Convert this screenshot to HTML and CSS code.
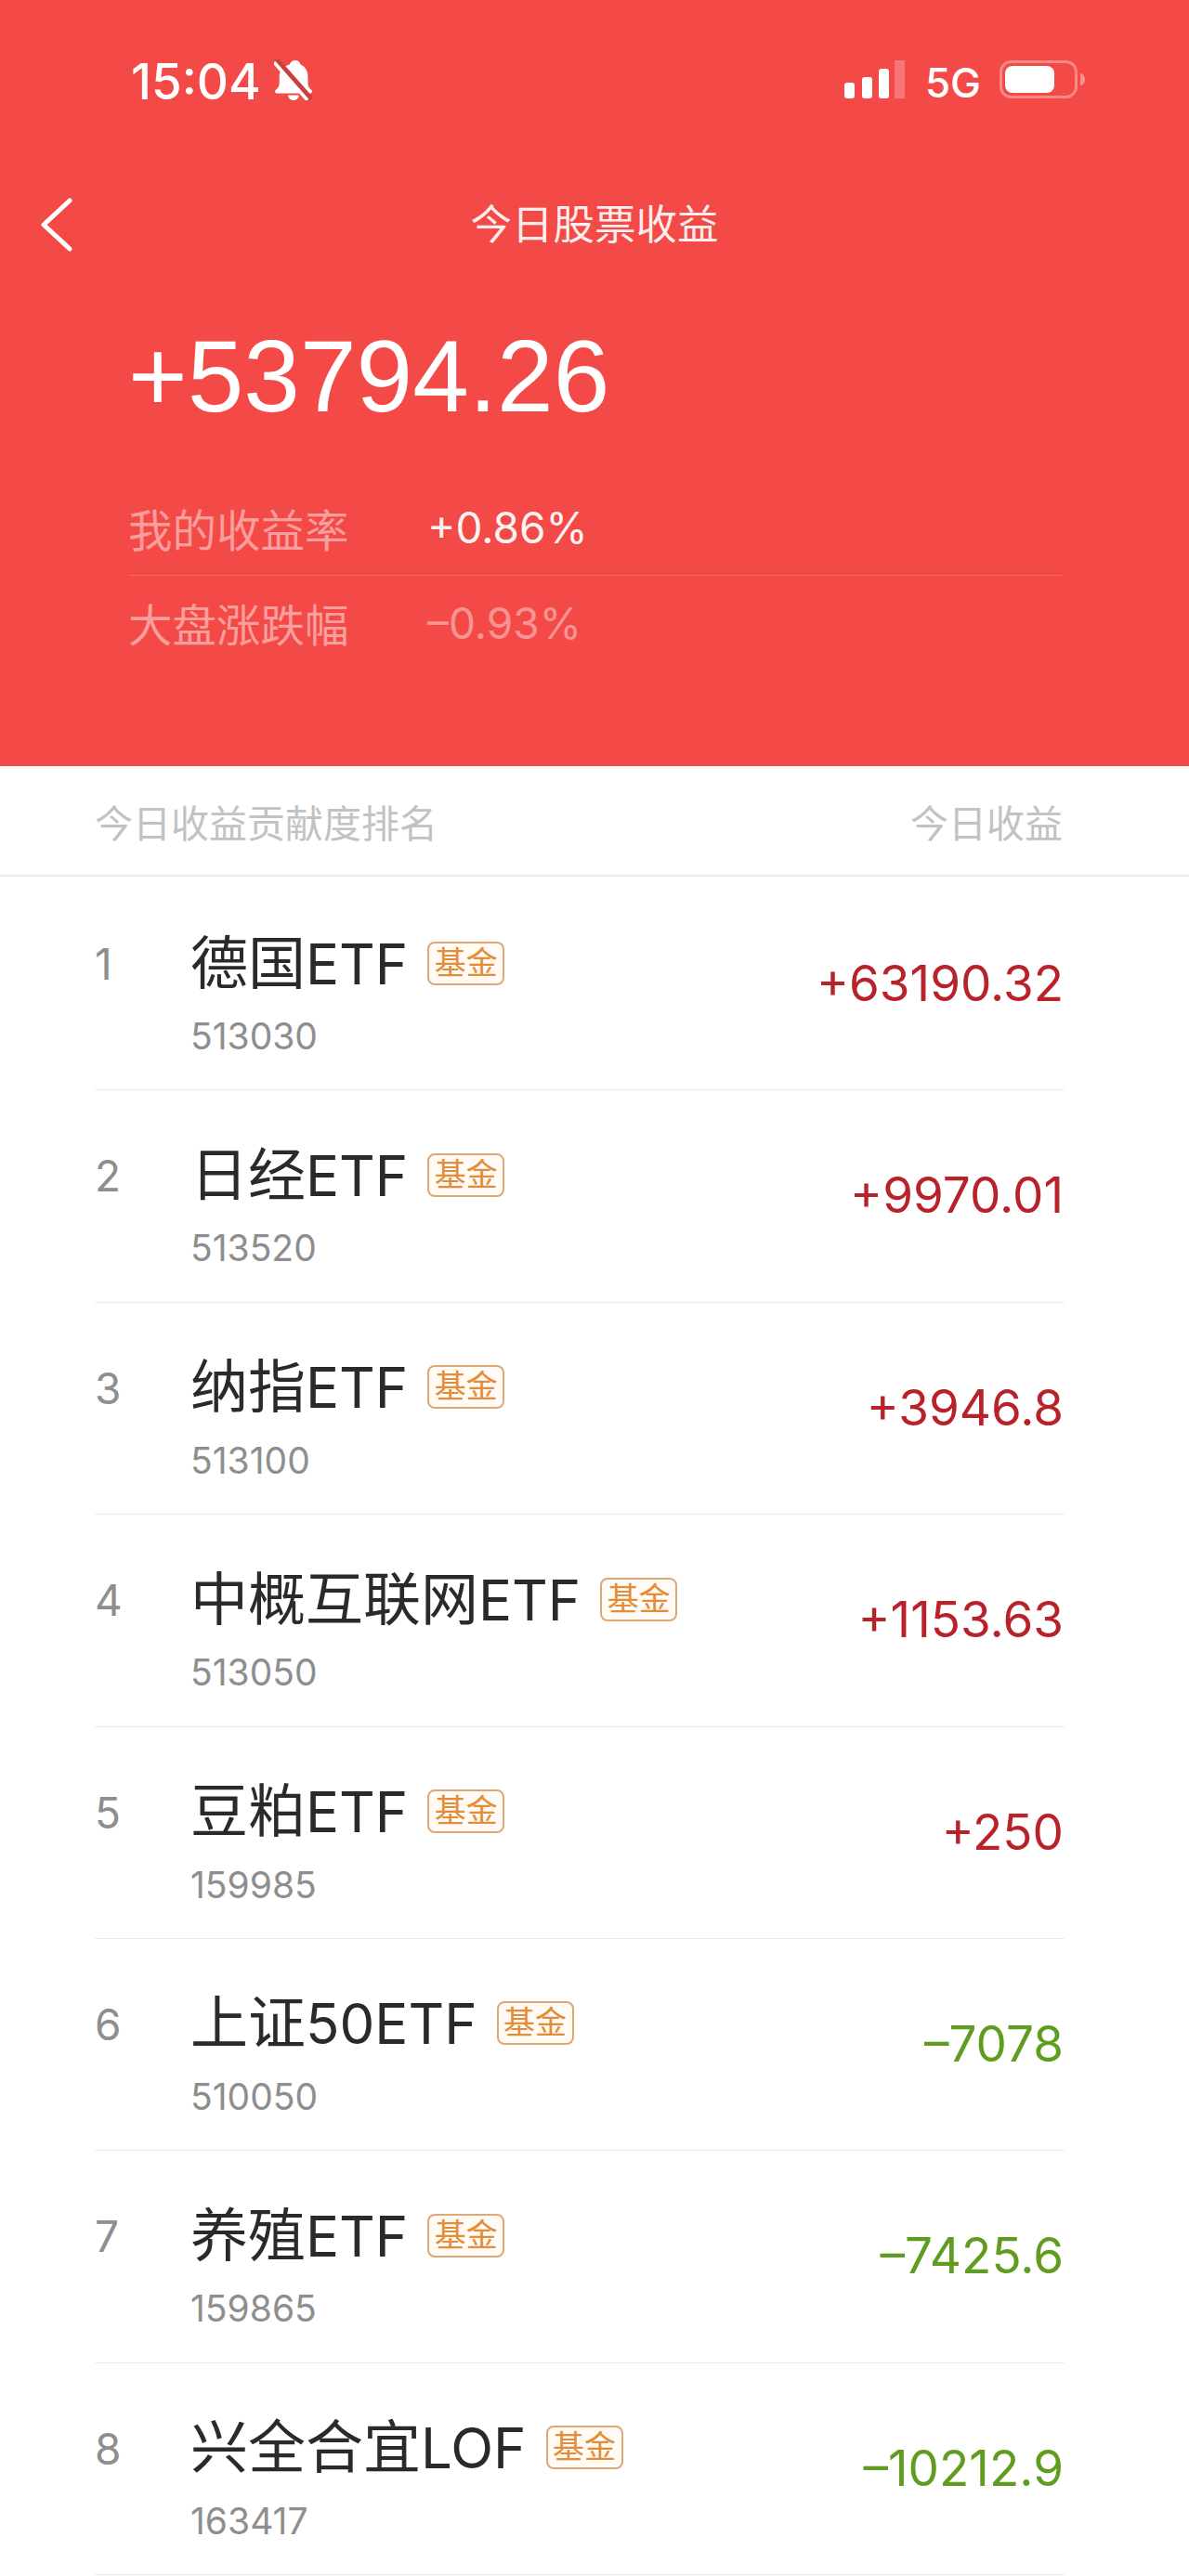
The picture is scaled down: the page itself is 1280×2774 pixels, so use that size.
FILE: index.html
```html
<!DOCTYPE html>
<html lang="zh-CN">
<head>
<meta charset="utf-8">
<title>今日股票收益</title>
<link rel="stylesheet" href="styles.css">
</head>
<body>
<div class="page">
  <header class="hero">
    <div class="status">
      <div class="status-left">
        <span class="time">15:04</span>
        <svg class="bell" viewBox="0 0 42 44"><path fill="#fff" d="M23 1c3 0 5 2 5.500 4.500C34 8 36.500 13 36.500 19v7c0 3 1.500 5 3.800 7 1.200 1.200.5 3.500-1.300 3.500H3c-1.800 0-2.500-2.300-1.300-3.500 2.300-2 4-4 4-7v-7c0-6 3-11 11-13.500C17.500 3 20 1 23 1z"/><path fill="#fff" d="M15 38.500h12c-.5 3.300-3 5.500-6 5.500s-5.500-2.200-6-5.500z"/><path stroke="#c9403f" stroke-width="6" d="M2 0l38 43"/><path stroke="#fff" stroke-width="3.500" d="M0 3l36 41"/></svg>
      </div>
      <div class="status-right">
        <svg class="signal" viewBox="0 0 65 41"><rect x="0" y="24" width="11" height="17" rx="3" fill="#fff"/><rect x="19" y="18" width="11" height="23" rx="3" fill="#fff"/><rect x="37" y="9" width="11" height="32" rx="3" fill="#fff"/><rect x="54" y="0" width="11" height="41" fill="#fff" fill-opacity=".25"/></svg>
        <span class="net">5G</span>
        <svg class="battery" viewBox="0 0 92 41"><rect x="1.500" y="1.500" width="81" height="38" rx="11" fill="none" stroke="#fff" stroke-opacity=".35" stroke-width="3"/><rect x="6" y="6" width="53" height="29" rx="8" fill="#fff"/><path d="M87 14c3 .5 5 3 5 6.500S90 26.500 87 27z" fill="#fff" fill-opacity=".4"/></svg>
      </div>
    </div>
    <nav class="nav">
      <svg class="back" viewBox="0 0 36 58"><path d="M33 3L5 29l28 26" fill="none" stroke="#fff" stroke-width="5" stroke-linecap="round" stroke-linejoin="round"/></svg>
      <h1 class="title">今日股票收益</h1>
    </nav>
    <div class="total">+53794.26</div>
    <div class="stats">
      <div class="stat stat-first"><span class="stat-label">我的收益率</span><span class="stat-value">+0.86%</span></div>
      <div class="stat"><span class="stat-label">大盘涨跌幅</span><span class="stat-value dim">–0.93%</span></div>
    </div>
  </header>

  <div class="col-head"><span>今日收益贡献度排名</span><span>今日收益</span></div>

  <ul class="list">
    <li class="row"><div class="row-in"><span class="rank">1</span><div class="info"><div class="name-line"><span class="name">德国<span class="lat">ETF</span></span><span class="badge">基金</span></div><div class="code">513030</div></div><span class="amount up">+63190.32</span></div></li>
    <li class="row"><div class="row-in"><span class="rank">2</span><div class="info"><div class="name-line"><span class="name">日经<span class="lat">ETF</span></span><span class="badge">基金</span></div><div class="code">513520</div></div><span class="amount up">+9970.01</span></div></li>
    <li class="row"><div class="row-in"><span class="rank">3</span><div class="info"><div class="name-line"><span class="name">纳指<span class="lat">ETF</span></span><span class="badge">基金</span></div><div class="code">513100</div></div><span class="amount up">+3946.8</span></div></li>
    <li class="row"><div class="row-in"><span class="rank">4</span><div class="info"><div class="name-line"><span class="name">中概互联网<span class="lat">ETF</span></span><span class="badge">基金</span></div><div class="code">513050</div></div><span class="amount up">+1153.63</span></div></li>
    <li class="row"><div class="row-in"><span class="rank">5</span><div class="info"><div class="name-line"><span class="name">豆粕<span class="lat">ETF</span></span><span class="badge">基金</span></div><div class="code">159985</div></div><span class="amount up">+250</span></div></li>
    <li class="row"><div class="row-in"><span class="rank">6</span><div class="info"><div class="name-line"><span class="name">上证<span class="lat">50ETF</span></span><span class="badge">基金</span></div><div class="code">510050</div></div><span class="amount down">–7078</span></div></li>
    <li class="row"><div class="row-in"><span class="rank">7</span><div class="info"><div class="name-line"><span class="name">养殖<span class="lat">ETF</span></span><span class="badge">基金</span></div><div class="code">159865</div></div><span class="amount down">–7425.6</span></div></li>
    <li class="row"><div class="row-in"><span class="rank">8</span><div class="info"><div class="name-line"><span class="name">兴全合宜<span class="lat">LOF</span></span><span class="badge">基金</span></div><div class="code">163417</div></div><span class="amount down">–10212.9</span></div></li>
  </ul>
</div>
</body>
</html>
```
FILE: styles.css
```css
* { box-sizing: border-box; }
html, body { margin: 0; padding: 0; background: #fff; }
body { font-family: "Liberation Sans", "Noto Sans CJK SC", sans-serif; }
.page { width: 1280px; height: 2774px; overflow: hidden; background: #fff; }

.hero { height: 825px; background: #f34a47; color: #fff; display: flex; flex-direction: column; }
.status { height: 171px; padding: 0 112px 0 141px; display: flex; justify-content: space-between; align-items: center; }
.status-left, .status-right { display: flex; align-items: center; }
.time { margin-top: 4px; font-family: Inter, "Liberation Sans", sans-serif; font-weight: 500; font-size: 53px; letter-spacing: 0; line-height: 60px; }
.bell { width: 42px; height: 44px; margin-left: 14px; }
.signal { width: 65px; height: 41px; }
.net { margin: 6px 20px 0 22px; font-family: Inter, "Liberation Sans", sans-serif; font-weight: 500; font-size: 44px; line-height: 50px; }
.battery { width: 92px; height: 41px; }

.nav { height: 144px; position: relative; display: flex; align-items: center; justify-content: center; }
.back { position: absolute; left: 42px; top: 42px; width: 36px; height: 58px; }
.title { margin: 0; font-size: 44.500px; font-weight: 400; line-height: 60px; color: rgba(255,255,255,.92); }

.total { margin: 30px 0 0 138px; font-size: 109px; line-height: 120px; }

.stats { margin: 52px 135px 0 138px; }
.stat { height: 101px; display: flex; align-items: center; font-size: 47.500px; }
.stat-first { height: 103px; border-bottom: 1px solid rgba(255,255,255,.16); }
.stat-label { width: 322px; color: rgba(255,255,255,.48); }
.stat-value { font-family: Inter, "Liberation Sans", sans-serif; font-size: 46px; color: rgba(255,255,255,.95); }
.stat-value.dim { color: rgba(255,255,255,.42); }

.col-head { height: 119px; padding: 0 136px 0 102px; display: flex; justify-content: space-between; align-items: center; border-bottom: 2px solid #ebebeb; font-size: 41px; color: #c2c2c2; }

.list { margin: 0; padding: 2px 0 0; list-style: none; }
.row { height: 228.400px; padding: 0 134px 0 102px; }
.row-in { height: 100%; display: flex; border-bottom: 1px solid #ececec; }
.rank { width: 103px; padding-top: 62px; font-family: Inter, "Liberation Sans", sans-serif; font-size: 46px; line-height: 60px; color: #8e8e8e; }
.info { flex: 1; padding-top: 52px; }
.name-line { display: flex; align-items: center; height: 80px; }
.name { font-size: 62px; line-height: 80px; color: #2a2a2a; }
.lat { font-family: Inter, "Liberation Sans", sans-serif; font-size: 60px; }
.badge { margin: -2px 0 0 21px; width: 83px; height: 47px; border: 2px solid #dca878; border-radius: 8px; background: #fffaf4; color: #e38d38; font-size: 34px; line-height: 42px; text-align: center; white-space: nowrap; }
.code { margin-top: 13px; font-family: Inter, "Liberation Sans", sans-serif; font-size: 39px; line-height: 50px; color: #8e8e8e; }
.amount { padding-top: 78px; padding-right: 1px; font-family: Inter, "Liberation Sans", sans-serif; font-size: 53px; line-height: 70px; }
.up { color: #b8222b; }
.down { color: #5f9c1f; }
```
